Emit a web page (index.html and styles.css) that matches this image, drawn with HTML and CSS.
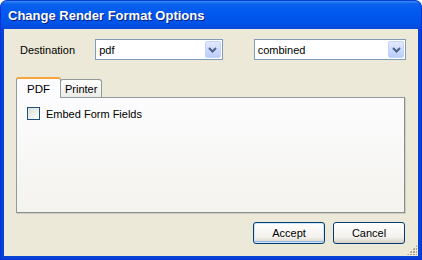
FILE: index.html
```html
<!DOCTYPE html>
<html lang="en">
<head>
    <title>Change Render Format Options</title>
    <meta charset="UTF-8" />
    <link rel="stylesheet" href="styles.css">
</head>
<body>
    <div class="window">
        <div class="titlebar">Change Render Format Options</div>
        <div class="client">
            <div class="dest-row">
                <label class="dest-label">Destination</label>
                <div class="combo combo-format">
                    <span class="combo-text">pdf</span>
                    <span class="combo-btn">
                        <svg width="9" height="6" viewBox="0 0 9 6"><path d="M1 1 L4.5 4.5 L8 1" fill="none" stroke="#4d6185" stroke-width="2"/></svg>
                    </span>
                </div>
                <div class="combo combo-mode">
                    <span class="combo-text">combined</span>
                    <span class="combo-btn">
                        <svg width="9" height="6" viewBox="0 0 9 6"><path d="M1 1 L4.5 4.5 L8 1" fill="none" stroke="#4d6185" stroke-width="2"/></svg>
                    </span>
                </div>
            </div>

            <div class="tabs">
                <div class="tab active">PDF</div>
                <div class="tab">Printer</div>
            </div>
            <div class="tab-panel">
                <label class="check-row">
                    <span class="checkbox"></span>
                    <span>Embed Form Fields</span>
                </label>
            </div>

            <div class="button-row">
                <button class="btn default">Accept</button>
                <button class="btn">Cancel</button>
            </div>
            <div class="grip"></div>
        </div>
    </div>
</body>
</html>
```

FILE: styles.css
```css
* {
    margin: 0;
    padding: 0;
    box-sizing: border-box;
}

body {
    font-family: "Liberation Sans", Arial, sans-serif;
    font-size: 11px;
    color: #000;
    background: #fff;
}

.window {
    width: 422px;
    height: 260px;
    display: flex;
    flex-direction: column;
    background: #0842d4;
    border-radius: 7px 7px 0 0;
    border: 1px solid #0831d9;
    border-top-color: #0a3dd0;
}

.titlebar {
    height: 28px;
    padding-left: 7px;
    display: flex;
    align-items: center;
    color: #fff;
    font-family: "Liberation Sans", Arial, sans-serif;
    font-weight: bold;
    font-size: 13px;
    text-shadow: 1px 1px 0 #0a1e80;
    background: linear-gradient(#3b8cf5 0%, #0a61ee 10%, #0058ee 45%, #0053e8 80%, #0a48d8 100%);
    border-radius: 6px 6px 0 0;
}

.client {
    position: relative;
    flex: 1;
    margin: 0 3px 3px;
    background: #ece9d8;
    padding: 10px 12px 0;
}

.dest-row {
    display: flex;
    align-items: center;
    height: 21px;
}

.dest-label {
    width: 80px;
    padding-left: 4px;
}

.combo {
    height: 21px;
    border: 1px solid #7f9db9;
    background: #fff;
    display: flex;
    align-items: center;
    padding: 1px;
}

.combo-format {
    width: 129px;
}

.combo-mode {
    width: 154px;
    margin-left: 31px;
}

.combo-text {
    flex: 1;
    padding-left: 2px;
}

.combo-btn {
    width: 16px;
    height: 17px;
    display: flex;
    align-items: center;
    justify-content: center;
    border: 1px solid #c3d3fd;
    border-radius: 2px;
    background: linear-gradient(#e1eafe, #b9cdfb);
}

.tabs {
    display: flex;
    align-items: flex-end;
    margin-top: 17px;
    height: 20px;
}

.tab {
    height: 18px;
    padding: 0 4px;
    display: flex;
    align-items: center;
    border: 1px solid #919b9c;
    border-bottom: none;
    border-radius: 3px 3px 0 0;
    background: linear-gradient(#fefefe, #ecebe6);
    margin-left: -1px;
}

.tab.active {
    width: 45px;
    justify-content: center;
    margin-left: 0;
    background: #fcfcfe;
    border-top: 2px solid #f5a73c;
    position: relative;
    z-index: 1;
    margin-bottom: -1px;
    height: 21px;
    font-size: 11.5px;
}

.tab-panel {
    width: 389px;
    height: 116px;
    border: 1px solid #919b9c;
    border-right-color: #8a8f8f;
    border-bottom-color: #8a8f8f;
    box-shadow: 1px 1px 0 #d0cdc0;
    background: linear-gradient(#fcfcfe, #f4f3ee);
    padding: 9px 10px;
}

.check-row {
    display: flex;
    align-items: center;
    gap: 6px;
}

.checkbox {
    width: 13px;
    height: 13px;
    border: 1px solid #1c5180;
    background: linear-gradient(135deg, #dcdcd7, #fff);
}

.button-row {
    display: flex;
    justify-content: flex-end;
    gap: 8px;
    margin-top: 9px;
    padding-right: 1px;
}

.btn {
    width: 72px;
    height: 22px;
    font-family: "Liberation Sans", Arial, sans-serif;
    font-size: 11px;
    color: #000;
    border: 1px solid #003c74;
    border-radius: 3px;
    background: linear-gradient(#fff, #f3f2ee 70%, #d6d0c5);
}

.btn.default {
    box-shadow: inset 0 0 0 1px #cee7ff, inset 0 -1px 0 1px #98b8ea;
}

.grip {
    position: absolute;
    right: 1px;
    bottom: 1px;
    width: 10px;
    height: 10px;
    background:
        radial-gradient(circle at 1px 1px, #a9a592 1px, transparent 1.3px) 0 0 / 3px 3px;
    clip-path: polygon(100% 0, 100% 100%, 0 100%);
}
```
